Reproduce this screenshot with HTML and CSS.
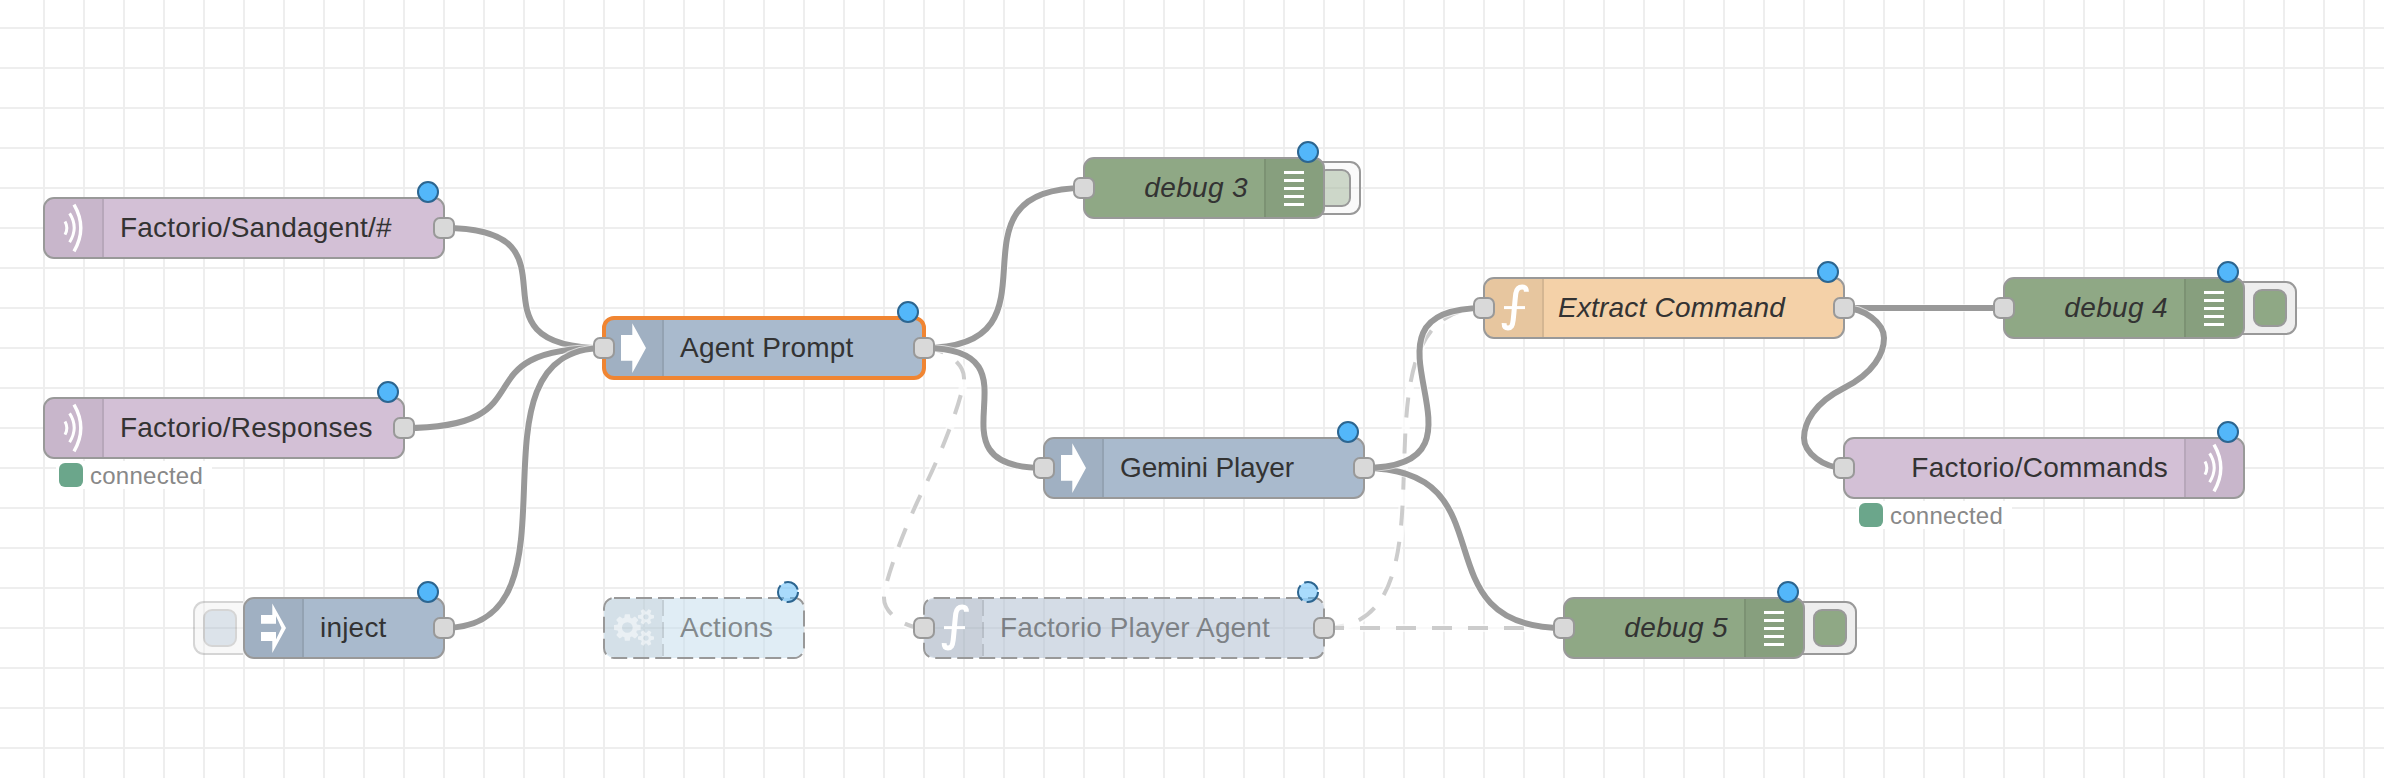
FILE: index.html
```html
<!DOCTYPE html>
<html lang="en">
<head>
<meta charset="utf-8">
<title>Flow editor</title>
<link rel="stylesheet" href="styles.css">
</head>
<body>
<svg class="defs" width="0" height="0">
  <symbol id="i-bridge" viewBox="0 0 60 60"><g fill="none" stroke="#fff" stroke-width="3"><path d="M21 23.4q3.700 6.400 0 13.200"/><path d="M25.600 15.400q9.200 14.200 0 28.800"/><path d="M30 6.600q13.600 23.200 0 46.800" stroke-width="3.400"/></g></symbol>
  <symbol id="i-arrow" viewBox="0 0 60 60"><path fill="#fff" d="M17 17H28.300V5.300L42 30 28.300 55V42.700H17z"/></symbol>
  <symbol id="i-inject" viewBox="0 0 60 60"><path fill="#fff" fill-rule="evenodd" d="M17 17H28.300V5.500L42 30 28.300 55V43H17V34H32V41.500L37.500 30 32 18V25.700H17z"/></symbol>
  <symbol id="i-function" viewBox="0 0 60 60"><g fill="none" stroke="#fff"><path stroke-width="5" d="M42.400 13.800C42.400 9.800 40.500 9 38.200 9 34.500 9 32.500 11 31.800 15.500 30.800 23 30.500 30 29.200 42 28.400 48.500 27.200 50 24 50 21.500 50 20 49 20.200 45.200"/><path stroke-width="3" d="M20 29.600H41"/></g></symbol>
  <symbol id="i-debug" viewBox="0 0 60 60"><path fill="#fff" d="M20 13h20v3H20zM20 21h20v3H20zM20 29h20v3H20zM20 37h20v3H20zM20 45h20v3H20z"/></symbol>
  <symbol id="i-cogs" viewBox="0 0 60 60"><path fill="#fff" fill-opacity=".5" transform="translate(10 10.800) scale(.02083)" d="M896 896q0-106-75-181t-181-75-181 75-75 181 75 181 181 75 181-75 75-181zm768 512q0-52-38-90t-90-38-90 38-38 90q0 53 37.5 90.5t90.5 37.5 90.5-37.5 37.5-90.5zm0-1024q0-52-38-90t-90-38-90 38-38 90q0 53 37.5 90.5t90.5 37.5 90.5-37.5 37.5-90.5zm-384 421v185q0 10-7 19.5t-16 10.5l-155 24q-11 35-32 76 34 48 90 115 7 11 7 20 0 12-7 19-23 30-82.5 89.5t-78.5 59.5q-11 0-21-7l-115-90q-37 19-77 31-11 108-23 155-7 24-30 24h-186q-11 0-20-7.5t-10-17.5l-23-153q-34-10-75-31l-118 89q-7 7-20 7-11 0-21-8-144-133-144-160 0-9 7-19 10-14 41-53t47-61q-23-44-35-82l-152-24q-10-1-17-9.5t-7-19.5v-185q0-10 7-19.5t16-10.5l155-24q11-35 32-76-34-48-90-115-7-11-7-20 0-12 7-20 22-30 82-89t79-59q11 0 21 7l115 90q34-18 77-32 11-108 23-154 7-24 30-24h186q11 0 20 7.5t10 17.5l23 153q34 10 75 31l118-89q8-7 20-7 11 0 21 8 144 133 144 160 0 8-7 19-12 16-42 54t-45 60q23 48 34 82l152 23q10 2 17 10.5t7 19.5zm640 533v140q0 16-149 31-12 27-30 52 51 113 51 138 0 4-4 7-122 71-124 71-8 0-46-47t-52-68q-20 2-30 2t-30-2q-14 21-52 68t-46 47q-2 0-124-71-4-3-4-7 0-25 51-138-18-25-30-52-149-15-149-31v-140q0-16 149-31 13-29 30-52-51-113-51-138 0-4 4-7 4-2 35-20t59-34 30-16q8 0 46 46.5t52 67.5q20-2 30-2t30 2q51-71 92-112l6-2q4 0 124 70 4 3 4 7 0 25-51 138 17 23 30 52 149 15 149 31zm0-1024v140q0 16-149 31-12 27-30 52 51 113 51 138 0 4-4 7-122 71-124 71-8 0-46-47t-52-68q-20 2-30 2t-30-2q-14 21-52 68t-46 47q-2 0-124-71-4-3-4-7 0-25 51-138-18-25-30-52-149-15-149-31v-140q0-16 149-31 13-29 30-52-51-113-51-138 0-4 4-7 4-2 35-20t59-34 30-16q8 0 46 46.5t52 67.5q20-2 30-2t30 2q51-71 92-112l6-2q4 0 124 70 4 3 4 7 0 25-51 138 17 23 30 52 149 15 149 31z"/></symbol>
  <symbol id="dot-dashed" viewBox="0 0 22 22"><circle cx="11" cy="11" r="10" fill="#53b7fa" fill-opacity=".5" stroke="#2c6590" stroke-width="2" stroke-dasharray="17 4.500"/></symbol>
</svg>

<main class="canvas">
  <svg class="wires" width="2384" height="778" viewBox="0 0 2384 778">
    <defs>
      <path id="w1" d="M924 348C944 348 964 363 964 378S944 448 924 488 884 583 884 598 904 628 924 628"/>
      <path id="w2" d="M1324 628C1474 628 1334 308 1484 308"/>
      <path id="w3" d="M1324 628H1564"/>
      <path id="w4" d="M444 228C594 228 454 348 604 348"/>
      <path id="w5" d="M404 428C554 428 454 348 604 348"/>
      <path id="w6" d="M444 628C594 628 454 348 604 348"/>
      <path id="w7" d="M924 348C1074 348 934 188 1084 188"/>
      <path id="w8" d="M924 348C1051.300 348 916.700 468 1044 468"/>
      <path id="w9" d="M1364 468C1514 468 1334 308 1484 308"/>
      <path id="w10" d="M1364 468C1514 468 1414 628 1564 628"/>
      <path id="w11" d="M1844 308H2004"/>
      <path id="w12" d="M1844 308C1864 308 1884 323 1884 338S1874 373 1844 388 1804 423 1804 438 1824 468 1844 468"/>
    </defs>
    <use class="edge" href="#w1"/><use class="wire off" href="#w1"/>
    <use class="edge" href="#w2"/><use class="wire off" href="#w2"/>
    <use class="edge" href="#w3"/><use class="wire off" href="#w3"/>
    <use class="edge" href="#w4"/><use class="wire" href="#w4"/>
    <use class="edge" href="#w5"/><use class="wire" href="#w5"/>
    <use class="edge" href="#w6"/><use class="wire" href="#w6"/>
    <use class="edge" href="#w7"/><use class="wire" href="#w7"/>
    <use class="edge" href="#w8"/><use class="wire" href="#w8"/>
    <use class="edge" href="#w10"/><use class="wire" href="#w10"/>
    <use class="edge" href="#w9"/><use class="wire" href="#w9"/>
    <use class="edge" href="#w11"/><use class="wire" href="#w11"/>
    <use class="edge" href="#w12"/><use class="wire" href="#w12"/>
  </svg>

  <div class="node mqtt n-sandagent">
    <span class="icon"><svg><use href="#i-bridge"/></svg></span><span class="label">Factorio/Sandagent/#</span>
    <i class="port out"></i><i class="dot"></i>
  </div>

  <div class="node mqtt n-responses">
    <span class="icon"><svg><use href="#i-bridge"/></svg></span><span class="label">Factorio/Responses</span>
    <i class="port out"></i><i class="dot"></i>
  </div>
  <div class="status s-responses"><i class="lamp"></i><span class="state">connected</span></div>

  <div class="button left faded b-inject"><i class="key"></i></div>
  <div class="node inject n-inject">
    <span class="icon"><svg><use href="#i-inject"/></svg></span><span class="label">inject</span>
    <i class="port out"></i><i class="dot"></i>
  </div>

  <div class="node inject selected n-agent">
    <span class="icon"><svg><use href="#i-arrow"/></svg></span><span class="label">Agent Prompt</span>
    <i class="port in"></i><i class="port out"></i><i class="dot"></i>
  </div>

  <div class="node disabled n-actions">
    <svg class="frame" width="202" height="62"><rect class="fill-group" x="1" y="1" width="200" height="60" rx="10"/><path class="rule" d="M60 3V59"/></svg>
    <span class="icon"><svg><use href="#i-cogs"/></svg></span><span class="label">Actions</span>
    <svg class="dot-off"><use href="#dot-dashed"/></svg>
  </div>

  <div class="node disabled n-fpa">
    <svg class="frame" width="402" height="62"><rect class="fill-agent" x="1" y="1" width="400" height="60" rx="10"/><path class="rule" d="M60 3V59"/></svg>
    <span class="icon"><svg><use href="#i-function"/></svg></span><span class="label">Factorio Player Agent</span>
    <i class="port in"></i><i class="port out"></i><svg class="dot-off"><use href="#dot-dashed"/></svg>
  </div>

  <div class="button right muted b-debug3"><i class="key"></i></div>
  <div class="node debug flip n-debug3">
    <span class="icon"><svg><use href="#i-debug"/></svg></span><span class="label">debug 3</span>
    <i class="port in"></i><i class="dot"></i>
  </div>

  <div class="node inject n-gemini">
    <span class="icon"><svg><use href="#i-arrow"/></svg></span><span class="label">Gemini Player</span>
    <i class="port in"></i><i class="port out"></i><i class="dot"></i>
  </div>

  <div class="node function n-extract">
    <span class="icon"><svg><use href="#i-function"/></svg></span><span class="label">Extract Command</span>
    <i class="port in"></i><i class="port out"></i><i class="dot"></i>
  </div>

  <div class="button right b-debug4"><i class="key"></i></div>
  <div class="node debug flip n-debug4">
    <span class="icon"><svg><use href="#i-debug"/></svg></span><span class="label">debug 4</span>
    <i class="port in"></i><i class="dot"></i>
  </div>

  <div class="node mqtt flip n-commands">
    <span class="icon"><svg><use href="#i-bridge"/></svg></span><span class="label">Factorio/Commands</span>
    <i class="port in"></i><i class="dot"></i>
  </div>
  <div class="status s-commands"><i class="lamp"></i><span class="state">connected</span></div>

  <div class="button right b-debug5"><i class="key"></i></div>
  <div class="node debug flip n-debug5">
    <span class="icon"><svg><use href="#i-debug"/></svg></span><span class="label">debug 5</span>
    <i class="port in"></i><i class="dot"></i>
  </div>
</main>
</body>
</html>
```
FILE: styles.css
```css
* { box-sizing: border-box; }
body { margin: 0; background: #fff; font-family: "Liberation Sans", Arial, sans-serif; }
.defs { position: absolute; }

.canvas {
  position: relative;
  width: 2384px;
  height: 778px;
  overflow: hidden;
  background: linear-gradient(to bottom, #eee 2px, transparent 2px) 0 27px / 40px 40px;
}
/* vertical grid lines start at the first full column */
.canvas::before {
  content: "";
  position: absolute;
  inset: 0 0 0 43px;
  background: linear-gradient(to right, #eee 2px, transparent 2px) 0 0 / 40px 40px;
}

/* wires */
.wires { position: relative; display: block; fill: none; }
.edge { stroke: #fff; stroke-opacity: .65; stroke-width: 8; }
.wire { stroke: #999; stroke-width: 6; }
.wire.off { stroke: #ccc; stroke-width: 4; stroke-dasharray: 20 16; }

/* nodes */
.node {
  position: absolute;
  display: flex;
  height: 62px;
  border: 2px solid #999;
  border-radius: 11px;
}
.node.flip { flex-direction: row-reverse; }
.mqtt { background: #d3c0d6; }
.inject { background: #a9bacd; }
.debug { background: #8fa885; }
.function { background: #f4d1a8; }

.icon {
  flex: none;
  width: 59px;
  height: 58px;
  border-right: 2px solid rgba(0, 0, 0, .13);
  border-radius: 9px 0 0 9px;
  background: rgba(0, 0, 0, .05);
  background-clip: padding-box;
}
.icon svg { display: block; width: 60px; height: 60px; margin: -1px 0 0 -1px; }
.flip .icon {
  border-right: 0;
  border-left: 2px solid rgba(0, 0, 0, .13);
  border-radius: 0 9px 9px 0;
}
.flip .icon svg { margin-left: -2px; }

.label {
  padding: 13px 16px 0;
  font-size: 28px;
  line-height: 32px;
  letter-spacing: .2px;
  white-space: nowrap;
  color: #333;
}
.debug .label, .function .label { font-style: italic; }
.debug .label { letter-spacing: .35px; }
.function .label { padding-left: 14px; }
.n-commands .label { letter-spacing: .27px; }
.n-gemini .label { letter-spacing: -.15px; }
.n-fpa .label { letter-spacing: .1px; }

.selected::before {
  content: "";
  position: absolute;
  inset: -3px;
  border: 4px solid #f08532;
  border-radius: 12px;
}

.disabled { border-color: transparent; }
.disabled .label { position: relative; color: rgba(51, 51, 51, .54); }
.disabled .icon { position: relative; border-color: transparent; }
.frame { position: absolute; left: -2px; top: -2px; }
.frame rect { stroke: #999; stroke-width: 2; stroke-dasharray: 16 6; }
.fill-group { fill: rgba(193, 219, 235, .5); }
.fill-agent { fill: rgba(169, 186, 205, .5); }
.rule { stroke: rgba(0, 0, 0, .13); stroke-width: 2; stroke-dasharray: 16 6; }

.port {
  position: absolute;
  top: 18px;
  width: 22px;
  height: 22px;
  border: 2px solid #999;
  border-radius: 7px;
  background: #d9d9d9;
}
.port.in { left: -12px; }
.port.out { right: -12px; }

.dot, .dot-off { position: absolute; top: -18px; right: 4px; width: 22px; height: 22px; }
.dot { border: 2px solid #2c6590; border-radius: 50%; background: #53b7fa; }

/* node buttons */
.button {
  position: absolute;
  display: flex;
  align-items: center;
  height: 54px;
  padding: 0 8px;
  border: 2px solid #999;
  border-radius: 11px;
  background: #eee;
}
.button.right { justify-content: flex-end; }
.key {
  flex: none;
  width: 34px;
  height: 38px;
  border: 2px solid #999;
  border-radius: 9px;
  background: #8fa885;
}
.left .key { background: #a9bacd; }
.faded { opacity: .4; }
.muted { background: rgba(238, 238, 238, .3); }
.muted .key { background: rgba(143, 168, 133, .42); }

/* status line */
.status {
  position: absolute;
  display: flex;
  align-items: center;
  gap: 7px;
  width: 156px;
  height: 28px;
  padding-left: 3px;
  background: #fff;
}
.lamp { width: 24px; height: 24px; border-radius: 6px; background: #6ba68b; }
.state { padding-top: 1px; font-size: 24px; line-height: 28px; letter-spacing: .25px; color: #888; }

/* canvas placement */
.n-sandagent { left: 43px; top: 197px; width: 402px; }
.n-responses { left: 43px; top: 397px; width: 362px; }
.s-responses { left: 56px; top: 461px; }
.b-inject { left: 193px; top: 601px; width: 50px; border-right: 0; border-radius: 11px 0 0 11px; }
.n-inject { left: 243px; top: 597px; width: 202px; }
.n-agent { left: 603px; top: 317px; width: 322px; }
.n-actions { left: 603px; top: 597px; width: 202px; }
.n-fpa { left: 923px; top: 597px; width: 402px; }
.b-debug3 { left: 1290px; top: 161px; width: 71px; }
.n-debug3 { left: 1083px; top: 157px; width: 242px; }
.n-gemini { left: 1043px; top: 437px; width: 322px; }
.n-extract { left: 1483px; top: 277px; width: 362px; }
.b-debug4 { left: 2226px; top: 281px; width: 71px; }
.n-debug4 { left: 2003px; top: 277px; width: 242px; }
.n-commands { left: 1843px; top: 437px; width: 402px; }
.s-commands { left: 1856px; top: 501px; }
.b-debug5 { left: 1786px; top: 601px; width: 71px; }
.n-debug5 { left: 1563px; top: 597px; width: 242px; }
```
